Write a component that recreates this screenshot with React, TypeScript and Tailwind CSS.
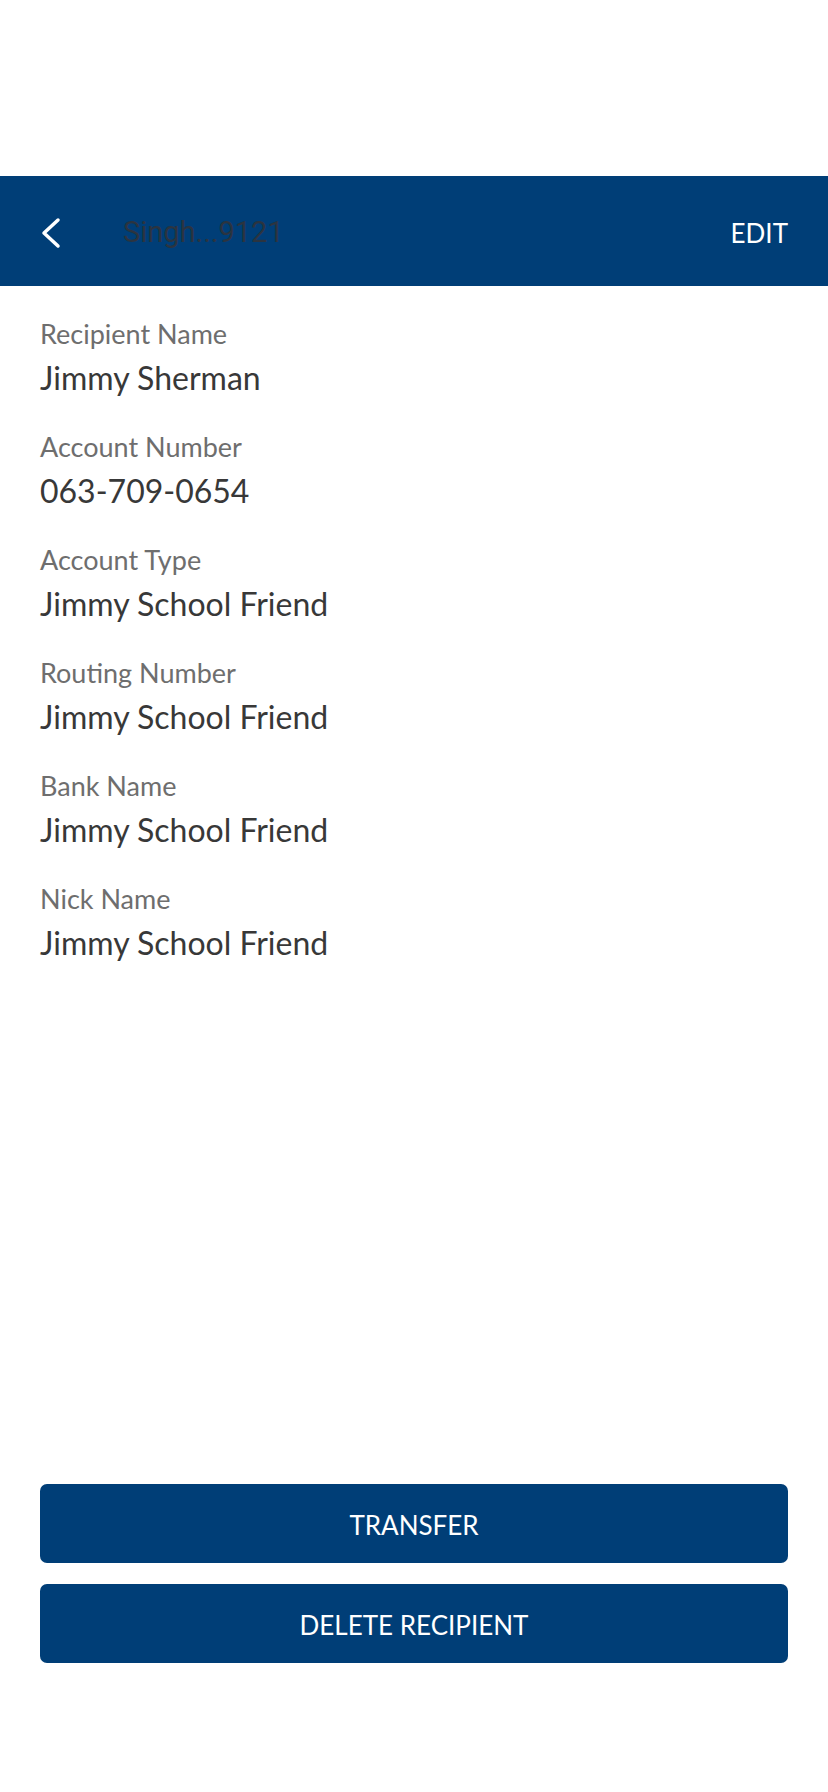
import React from "react";

const fields = [
  { label: "Recipient Name", value: "Jimmy Sherman" },
  { label: "Account Number", value: "063-709-0654" },
  { label: "Account Type", value: "Jimmy School Friend" },
  { label: "Routing Number", value: "Jimmy School Friend" },
  { label: "Bank Name", value: "Jimmy School Friend" },
  { label: "Nick Name", value: "Jimmy School Friend" },
];

export default function App() {
  return (
    <div
      className="min-h-[1792px] w-[828px] bg-white flex flex-col"
      style={{ fontFamily: "Lato, 'Open Sans', sans-serif" }}
    >
      <div className="h-[176px]" />
      <div className="h-[110px] bg-[#003e77] flex items-center pt-[4px] pl-[38px] pr-[40px]">
        <svg width="24" height="32" viewBox="0 0 24 32" className="shrink-0">
          <path d="M20 3 L6 16 L20 29" fill="none" stroke="white" strokeWidth="3.5" strokeLinecap="round" strokeLinejoin="round" />
        </svg>
        <div
          className="ml-[61px] text-[29px] text-[#2b3440]"
          style={{ fontFamily: "Roboto, sans-serif" }}
        >
          Singh...9121
        </div>
        <div className="ml-auto text-[26px] text-white">EDIT</div>
      </div>
      <div className="flex-1 px-[40px] pt-[32px]">
        {fields.map((f) => (
          <div key={f.label} className="mb-[34px]">
            <div className="text-[27px] leading-[32px] text-[#6e6e6e]">{f.label}</div>
            <div className="mt-[9px] text-[32px] leading-[38px] text-[#383838]">{f.value}</div>
          </div>
        ))}
      </div>
      <div className="px-[40px] pb-[129px] flex flex-col gap-[21px]">
        <button className="h-[79px] w-full rounded-[7px] bg-[#003e77] text-white text-[26px] pt-[4px]">
          TRANSFER
        </button>
        <button className="h-[79px] w-full rounded-[7px] bg-[#003e77] text-white text-[26px] pt-[4px]">
          DELETE RECIPIENT
        </button>
      </div>
    </div>
  );
}
